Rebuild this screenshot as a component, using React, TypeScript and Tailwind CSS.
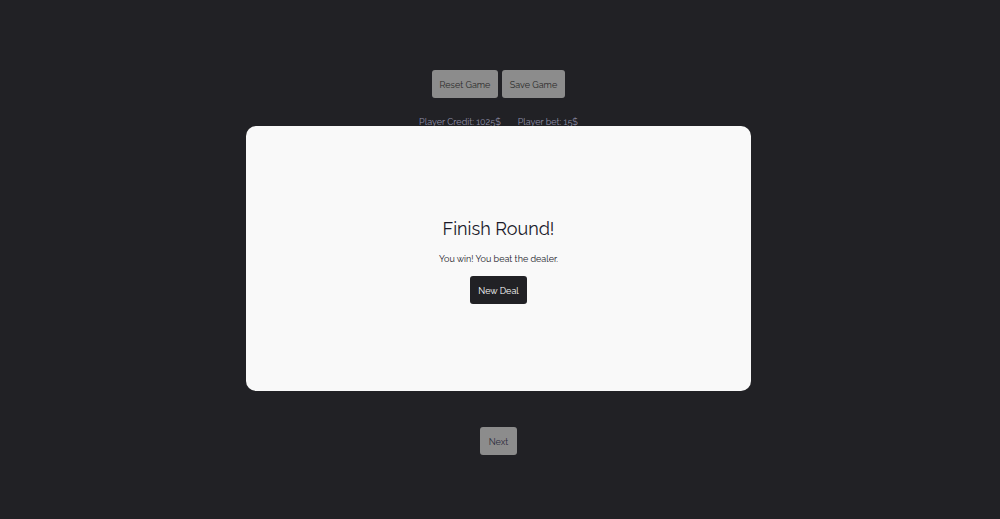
import React from 'react';

const font = { fontFamily: 'Raleway, Lato, "Open Sans", sans-serif' };

export default function App() {
  return (
    <div className="relative w-full h-[519px] bg-[#212125] overflow-hidden" style={font}>
      <div className="flex flex-col items-center pt-[70px] pr-[3px]">
        <div className="flex gap-[4px]">
          <button className="h-[28px] w-[66px] rounded-[3px] bg-[#8c8c8c] text-[9px] leading-[30px] text-[#2a2a2a]">Reset Game</button>
          <button className="h-[28px] w-[63px] rounded-[3px] bg-[#8c8c8c] text-[9px] leading-[30px] text-[#2a2a2a]">Save Game</button>
        </div>
        <div className="mt-[18px] flex gap-[17px] text-[9px] leading-[12px] text-[#8f8fa8]">
          <span>Player Credit: 1025$</span>
          <span>Player bet: 15$</span>
        </div>
        <div className="h-[299px]" />
        <button className="h-[28px] w-[37px] rounded-[3px] bg-[#8c8c8c] text-[9px] leading-[30px] text-[#2a2a3a]">Next</button>
      </div>

      <div className="absolute left-[246px] top-[126px] w-[505px] h-[265px] rounded-[10px] bg-[#f9f9f9] flex flex-col items-center justify-center">
        <h2 className="text-[18px] leading-[22px] text-[#1a1a2a] mt-[5px]">Finish Round!</h2>
        <p className="mt-[13px] text-[9px] leading-[12px] text-[#1a1a2a]">You win! You beat the dealer.</p>
        <button className="mt-[11px] h-[28px] w-[57px] rounded-[3px] bg-[#212125] text-[9px] leading-[30px] text-white">New Deal</button>
      </div>
    </div>
  );
}
